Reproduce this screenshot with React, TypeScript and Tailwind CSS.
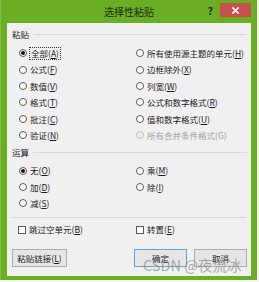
import React from "react";

type Opt = { text: string; key: string; checked?: boolean; disabled?: boolean; focus?: boolean };

const pasteLeft: Opt[] = [
  { text: "全部", key: "A", checked: true, focus: true },
  { text: "公式", key: "F" },
  { text: "数值", key: "V" },
  { text: "格式", key: "T" },
  { text: "批注", key: "C" },
  { text: "验证", key: "N" },
];

const pasteRight: Opt[] = [
  { text: "所有使用源主题的单元", key: "H" },
  { text: "边框除外", key: "X" },
  { text: "列宽", key: "W" },
  { text: "公式和数字格式", key: "R" },
  { text: "值和数字格式", key: "U" },
  { text: "所有合并条件格式", key: "G", disabled: true },
];

const opLeft: Opt[] = [
  { text: "无", key: "O", checked: true },
  { text: "加", key: "D" },
  { text: "减", key: "S" },
];

const opRight: Opt[] = [
  { text: "乘", key: "M" },
  { text: "除", key: "I" },
];

function Label({ text, keyChar, disabled }: { text: string; keyChar: string; disabled?: boolean }) {
  return (
    <span className={disabled ? "text-[#a3a3a3]" : "text-[#1b1b1b]"}>
      {text}(
      {disabled ? keyChar : <span className="underline underline-offset-[1px]">{keyChar}</span>})
    </span>
  );
}

function Radio({ opt }: { opt: Opt }) {
  return (
    <div className="flex h-[16.4px] items-center gap-[3px]">
      <span
        className={`flex h-[8px] w-[8px] shrink-0 items-center justify-center rounded-full border ${
          opt.disabled ? "border-[#c4c4c4] bg-[#ececec]" : "border-[#5a5a5a] bg-white"
        }`}
      >
        {opt.checked && <span className="h-[4px] w-[4px] rounded-full bg-[#111]" />}
      </span>
      <span className={opt.focus ? "px-[1px] leading-[11px] outline-1 outline-dotted outline-[#333]" : ""}>
        <Label text={opt.text} keyChar={opt.key} disabled={opt.disabled} />
      </span>
    </div>
  );
}

function Check({ text, keyChar }: { text: string; keyChar: string }) {
  return (
    <div className="flex h-[16.4px] items-center gap-[3px]">
      <span className="h-[8px] w-[8px] shrink-0 border border-[#5a5a5a] bg-white" />
      <Label text={text} keyChar={keyChar} />
    </div>
  );
}

function Header({ title }: { title: string }) {
  return (
    <div className="flex h-[14px] items-center gap-[4px] pl-[5px] pr-[4px]">
      <span className="text-[#1b1b1b]">{title}</span>
      <span className="h-0 flex-1 border-t border-[#dadada]" />
    </div>
  );
}

function Button({ children, primary, w }: { children: React.ReactNode; primary?: boolean; w: string }) {
  return (
    <div
      className={`flex h-[18px] items-center justify-center border bg-[#e6e6e6] text-[#1b1b1b] ${w} ${
        primary ? "border-[#5aa7e4]" : "border-[#adadad]"
      }`}
    >
      {children}
    </div>
  );
}

export default function App() {
  return (
    <div className="relative h-[282px] w-[259px] bg-[#f3f3f3] font-['Noto_Sans_CJK_SC',sans-serif] text-[8.5px] leading-none">
      <div className="flex h-[280px] w-[257px] flex-col border-l border-[#84bd4a] bg-[#69ae23] pb-[4px] pl-[6px] pr-[6px]">
        {/* title bar */}
        <div className="grid h-[23px] grid-cols-[1fr_auto_1fr] items-center">
          <span />
          <span className="text-[10px] text-[#1f2a14]">选择性粘贴</span>
          <div className="flex items-start justify-end gap-[7px] self-start pt-[3px]">
            <span className="pt-[3px] text-[10px] font-bold text-[#1f2a14]">?</span>
            <div className="flex h-[14px] w-[31px] items-center justify-center bg-[#c75050]">
              <svg width="7" height="7" viewBox="0 0 7 7">
                <path d="M1 1L6 6M6 1L1 6" stroke="white" strokeWidth="1.6" strokeLinecap="square" />
              </svg>
            </div>
          </div>
        </div>

        {/* content */}
        <div className="flex flex-1 flex-col bg-[#f0f0f0] pt-[4px]">
          <Header title="粘贴" />
          <div className="mt-[4px] grid grid-cols-[117px_1fr] pl-[12px]">
            <div className="flex flex-col">
              {pasteLeft.map((o) => (
                <Radio key={o.key} opt={o} />
              ))}
            </div>
            <div className="flex flex-col">
              {pasteRight.map((o) => (
                <Radio key={o.key} opt={o} />
              ))}
            </div>
          </div>

          <div className="mt-[2px]">
            <Header title="运算" />
          </div>
          <div className="mt-[3px] grid grid-cols-[117px_1fr] pl-[12px]">
            <div className="flex flex-col">
              {opLeft.map((o) => (
                <Radio key={o.key} opt={o} />
              ))}
            </div>
            <div className="flex flex-col">
              {opRight.map((o) => (
                <Radio key={o.key} opt={o} />
              ))}
            </div>
          </div>

          <div className="ml-[5px] mr-[4px] mt-[5px] border-t border-[#dadada]" />

          <div className="mt-[4px] grid grid-cols-[118px_1fr] pl-[11px]">
            <Check text="跳过空单元" keyChar="B" />
            <Check text="转置" keyChar="E" />
          </div>

          <div className="mt-[11px] flex pl-[5px] pr-[4px]">
            <Button w="w-[55px]">
              <Label text="粘贴链接" keyChar="L" />
            </Button>
            <div className="ml-auto flex gap-[7px]">
              <Button w="w-[53px]" primary>
                确定
              </Button>
              <Button w="w-[53px]">取消</Button>
            </div>
          </div>
        </div>
      </div>

      {/* watermark */}
      <span className="pointer-events-none absolute left-[143px] top-[256px] text-[14.5px] leading-[18px] text-[#8a8a8a]/70">
        CSDN @夜流冰
      </span>
    </div>
  );
}
